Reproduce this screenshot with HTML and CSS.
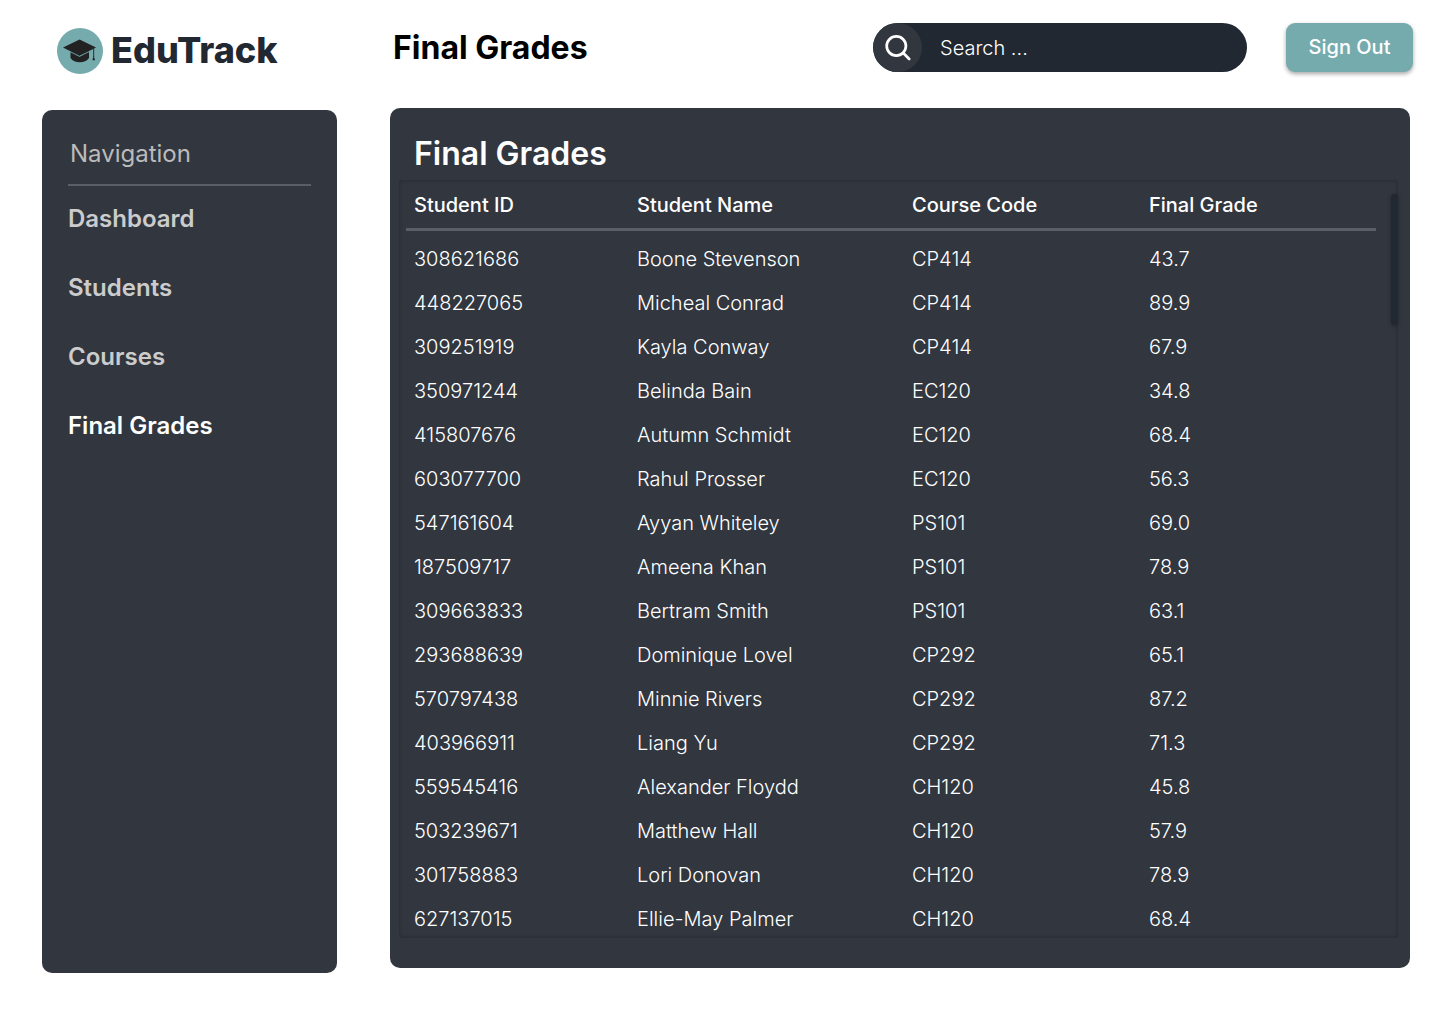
FILE: index.html
```html
<!DOCTYPE html>
<html lang="en">
<head>
<meta charset="utf-8">
<meta name="viewport" content="width=device-width, initial-scale=1">
<title>EduTrack - Final Grades</title>
<link rel="stylesheet" href="styles.css">
</head>
<body>
<div class="layout">
  <header class="topbar">
    <a class="brand" href="#">
      <svg class="brand-icon" viewBox="0 0 46 46" aria-hidden="true">
        <circle cx="23" cy="23" r="23" fill="#76abae"/>
        <path d="M13.500 22V30c2 3 5.500 4.200 9.300 4.200S30 33 32 30v-8l-9.200 6.600z" fill="#222"/>
        <path d="M6 19.500 22.500 11.500 39 19.500 22.500 28z" fill="#222"/>
        <path d="M12.500 23.300 22.500 28.400 32.800 23.200" fill="none" stroke="#76abae" stroke-width=".9"/>
        <path d="M36.700 20v9" fill="none" stroke="#222" stroke-width=".9"/>
        <path d="M36.700 28l1.400 4.200h-2.800z" fill="#222"/>
      </svg>
      <span class="brand-name">EduTrack</span>
    </a>
    <div class="topbar-main">
      <h1 class="page-title">Final Grades</h1>
      <form class="search" role="search">
        <button class="search-button" type="button" aria-label="Search">
          <svg viewBox="0 0 28 28" width="28" height="28" fill="none" stroke="#fff" stroke-width="2.700" stroke-linecap="round" aria-hidden="true">
            <circle cx="12.300" cy="12" r="9.600"/>
            <path d="M19.300 19 25.200 25"/>
          </svg>
        </button>
        <input class="search-input" type="text" placeholder="Search ..." aria-label="Search">
      </form>
      <button class="sign-out" type="button">Sign Out</button>
    </div>
  </header>

  <nav class="sidebar" aria-label="Navigation">
    <h2 class="sidebar-title">Navigation</h2>
    <ul class="menu">
      <li><a href="#">Dashboard</a></li>
      <li><a href="#">Students</a></li>
      <li><a href="#">Courses</a></li>
      <li><a class="active" href="#" aria-current="page">Final Grades</a></li>
    </ul>
  </nav>

  <main class="card">
    <h2 class="card-title">Final Grades</h2>
    <div class="panel">
      <div class="scroller">
        <table class="grades">
          <colgroup><col class="col-id"><col class="col-name"><col class="col-course"><col></colgroup>
          <thead>
            <tr><th scope="col">Student ID</th><th scope="col">Student Name</th><th scope="col">Course Code</th><th scope="col">Final Grade</th></tr>
          </thead>
          <tbody>
            <tr><td>308621686</td><td>Boone Stevenson</td><td>CP414</td><td>43.7</td></tr>
            <tr><td>448227065</td><td>Micheal Conrad</td><td>CP414</td><td>89.9</td></tr>
            <tr><td>309251919</td><td>Kayla Conway</td><td>CP414</td><td>67.9</td></tr>
            <tr><td>350971244</td><td>Belinda Bain</td><td>EC120</td><td>34.8</td></tr>
            <tr><td>415807676</td><td>Autumn Schmidt</td><td>EC120</td><td>68.4</td></tr>
            <tr><td>603077700</td><td>Rahul Prosser</td><td>EC120</td><td>56.3</td></tr>
            <tr><td>547161604</td><td>Ayyan Whiteley</td><td>PS101</td><td>69.0</td></tr>
            <tr><td>187509717</td><td>Ameena Khan</td><td>PS101</td><td>78.9</td></tr>
            <tr><td>309663833</td><td>Bertram Smith</td><td>PS101</td><td>63.1</td></tr>
            <tr><td>293688639</td><td>Dominique Lovel</td><td>CP292</td><td>65.1</td></tr>
            <tr><td>570797438</td><td>Minnie Rivers</td><td>CP292</td><td>87.2</td></tr>
            <tr><td>403966911</td><td>Liang Yu</td><td>CP292</td><td>71.3</td></tr>
            <tr><td>559545416</td><td>Alexander Floydd</td><td>CH120</td><td>45.8</td></tr>
            <tr><td>503239671</td><td>Matthew Hall</td><td>CH120</td><td>57.9</td></tr>
            <tr><td>301758883</td><td>Lori Donovan</td><td>CH120</td><td>78.9</td></tr>
            <tr><td>627137015</td><td>Ellie-May Palmer</td><td>CH120</td><td>68.4</td></tr>
          </tbody>
        </table>
      </div>
      <span class="thumb" aria-hidden="true"></span>
    </div>
  </main>
</div>
</body>
</html>
```
FILE: styles.css
```css
* {
  box-sizing: border-box;
}

body {
  margin: 0;
  background: #fff;
  color: #fff;
  font-family: Inter, "Liberation Sans", sans-serif;
}

h1,
h2 {
  margin: 0;
}

a {
  color: inherit;
  text-decoration: none;
}

button {
  border: 0;
  padding: 0;
  font: inherit;
  color: inherit;
  cursor: pointer;
}

.layout {
  display: grid;
  grid-template-columns: 295px minmax(0, 1fr);
  column-gap: 53px;
  align-items: start;
  padding: 0 30px 0 42px;
}

.topbar {
  grid-column: 1 / -1;
  display: grid;
  grid-template-columns: subgrid;
  align-items: start;
  height: 108px;
  padding-top: 23px;
}

.brand {
  display: flex;
  align-items: flex-start;
  gap: 8px;
  padding: 5px 0 0 15px;
  font-size: 36px;
  font-weight: 800;
  color: #222831;
}

.brand-icon {
  width: 46px;
  height: 46px;
}

.brand-name {
  line-height: 44px;
}

.topbar-main {
  display: flex;
  align-items: center;
  margin-right: -3px;
}

.page-title {
  flex: 1;
  padding-left: 3px;
  font-size: 32px;
  font-weight: 700;
  line-height: 49px;
  color: #000;
}

.search {
  display: flex;
  width: 374px;
  height: 49px;
  margin-right: 39px;
  border-radius: 25px;
  background: #222831;
  overflow: hidden;
}

.search-button {
  display: grid;
  place-items: center;
  flex: none;
  width: 49px;
  height: 49px;
  border-radius: 50%;
  background: #31363f;
}

.search-input {
  flex: 1;
  min-width: 0;
  border: 0;
  padding: 0 18px;
  background: none;
  font: 300 20px/24px Inter, "Liberation Sans", sans-serif;
  color: #fff;
  outline: 0;
}

.search-input::placeholder {
  color: #fff;
  opacity: 1;
}

.sign-out {
  width: 127px;
  height: 49px;
  padding-bottom: 2px;
  border-radius: 9px;
  background: #76abae;
  box-shadow: 0 2px 4px rgba(0, 0, 0, 0.35);
  font-size: 20px;
  font-weight: 500;
}

.sidebar {
  min-height: calc(100vh - 161px);
  margin-top: 2px;
  padding: 26px;
  border-radius: 10px;
  background: #31363f;
}

.sidebar-title {
  height: 50px;
  padding-left: 2px;
  border-bottom: 2px solid #5a5e66;
  font-size: 24px;
  font-weight: 400;
  line-height: 36px;
  color: #bbb;
}

.menu {
  display: grid;
  gap: 33px;
  margin: 0;
  padding: 15px 0 0;
  list-style: none;
  font-size: 24px;
  font-weight: 600;
  line-height: 36px;
  color: #ccc;
}

.menu .active {
  color: #fff;
}

.card {
  display: flex;
  flex-direction: column;
  height: calc(100vh - 164px);
  padding: 24px 12px 30px 9px;
  border-radius: 10px;
  background: #31363f;
}

.card-title {
  padding-left: 15px;
  font-size: 32px;
  font-weight: 600;
  line-height: 44px;
}

.panel {
  position: relative;
  flex: 1;
  min-height: 0;
  margin-top: 4px;
  border-radius: 3px;
  box-shadow: inset 0 0 4px rgba(0, 0, 0, 0.25);
}

.scroller {
  height: 100%;
  padding: 0 22px 0 7px;
  overflow-y: auto;
  scrollbar-width: none;
}

.grades {
  width: 100%;
  table-layout: fixed;
  border-collapse: separate;
  border-spacing: 0;
  font-size: 20px;
  line-height: 24px;
}

.col-id {
  width: 223px;
}

.col-name {
  width: 275px;
}

.col-course {
  width: 237px;
}

.grades th {
  height: 51px;
  padding: 2px 8px 0;
  border-bottom: 3px solid #5a5e66;
  font-weight: 500;
  text-align: left;
}

.grades td {
  height: 44px;
  padding: 0 8px;
  font-weight: 300;
}

.grades tbody::before {
  content: "";
  display: block;
  height: 6px;
}

.thumb {
  position: absolute;
  top: 14px;
  right: 0;
  width: 7px;
  height: 131px;
  border-radius: 4px;
  background: #222831;
  box-shadow: 0 1px 4px rgba(0, 0, 0, 0.25);
}
```
